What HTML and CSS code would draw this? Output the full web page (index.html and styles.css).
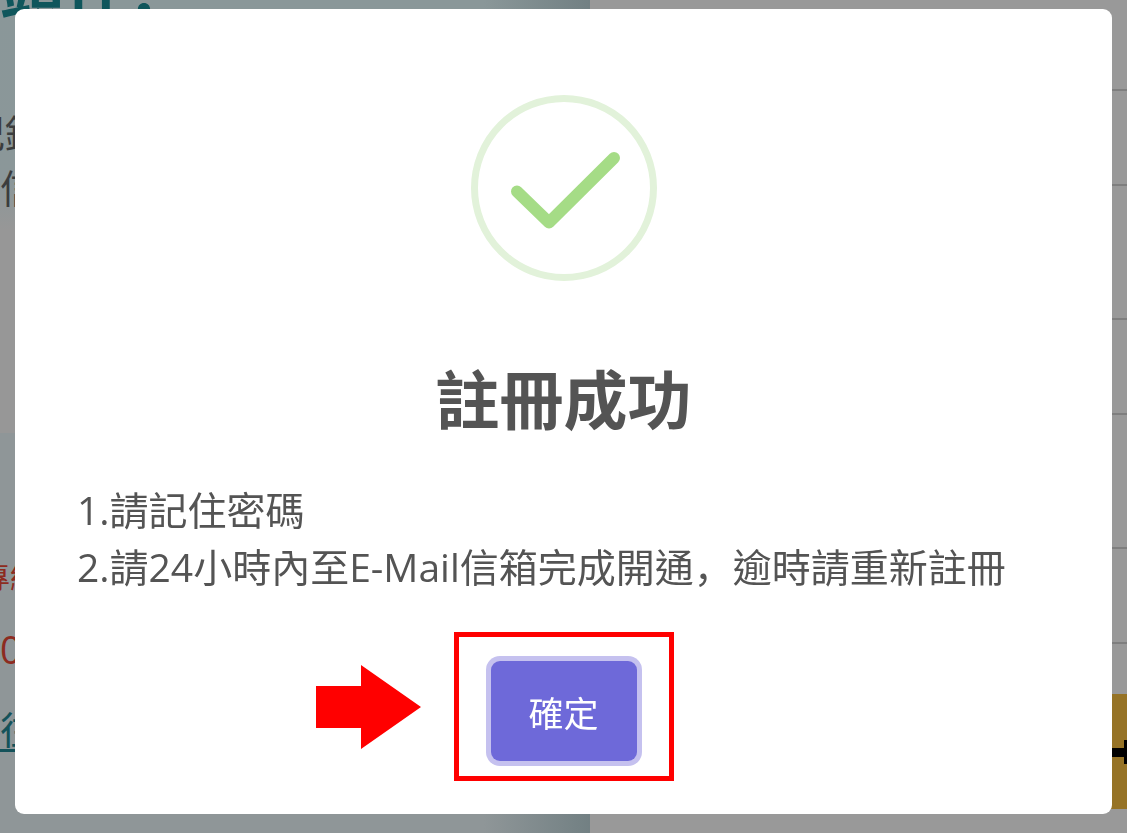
FILE: index.html
```html
<!DOCTYPE html>
<html lang="zh-Hant">
<head>
<meta charset="utf-8">
<title>註冊成功</title>
<link rel="stylesheet" href="styles.css">
</head>
<body>
<div class="page">
  <section class="intro">
    <div class="intro-top">
      <h1 class="headline">迎頭任<span lang="zh-Hans">：</span></h1>
      <p class="copy">紀錄</p>
      <p class="copy">信</p>
    </div>
    <div class="contact">
      <p class="alert">專線</p>
      <p class="alert phone">0</p>
      <a class="more" href="#">往</a>
    </div>
  </section>
  <section class="form">
    <div class="row row-first"></div>
    <div class="row row-short"></div>
    <div class="row row-tall"></div>
    <div class="row row-short"></div>
    <div class="row row-tall"></div>
    <div class="row row-short"></div>
    <div class="submit">
      <svg class="plus" viewBox="0 0 40 24" aria-hidden="true"><path d="M0 8H12V0H22V24H12V17H0Z"/></svg>
    </div>
  </section>
</div>
<div class="overlay">
  <div class="modal" role="dialog" aria-modal="true" aria-labelledby="modal-title">
    <svg class="success" viewBox="0 0 188 188" aria-hidden="true">
      <circle cx="94" cy="94" r="89.5"/>
      <path d="M47 97.500L79 128.500L144 64"/>
    </svg>
    <h2 class="title" id="modal-title">註冊成功</h2>
    <div class="message">
      <p>1.請記住密碼</p>
      <p>2.請24小時內至E-Mail信箱完成開通<span lang="zh-Hans">，</span>逾時請重新註冊</p>
    </div>
    <div class="actions">
      <svg class="arrow" viewBox="0 0 105 84" aria-hidden="true"><path d="M0 21H45V0L105 42L45 84V63H0Z"/></svg>
      <div class="highlight"><button class="confirm" type="button">確定</button></div>
      <span></span>
    </div>
  </div>
</div>
</body>
</html>
```
FILE: styles.css
```css
* { box-sizing: border-box; }
body {
  margin: 0;
  background: #999;
  color: #545454;
  font-family: "Open Sans", "Noto Sans CJK SC", sans-serif;
  overflow: hidden;
}
h1, h2, p { margin: 0; }
.page {
  display: grid;
  grid-template-columns: 590fr 537fr;
  height: 100vh;
  overflow: hidden;
}
.intro {
  background: linear-gradient(90deg, transparent 82%, #728083 100%), #8f9698;
  overflow: hidden;
}
.intro-top {
  display: flow-root;
  height: 433px;
  background: linear-gradient(90deg, transparent 82%, #728083 100%), linear-gradient(#8a9799 0, #8b9799 180px, #979797 230px, #979797 100%);
}
.headline {
  margin: -42px 0 0 -64px;
  padding-bottom: 83px;
  color: #0f565c;
  font-size: 64px;
  line-height: 64px;
}
.copy {
  margin-left: -34px;
  color: #3b3d3e;
  font-size: 39px;
  line-height: 55px;
}
.copy + .copy { margin-left: 0; }
.contact { padding-top: 116px; }
.alert {
  margin-left: -20px;
  color: #8d2b20;
  font-size: 30px;
  line-height: 56px;
}
.phone {
  margin-left: 0;
  font-size: 38px;
  line-height: 88px;
}
.more {
  color: #14525a;
  font-size: 38px;
  line-height: 72px;
  text-underline-offset: 5px;
}
.row {
  height: 95px;
  border-bottom: 2px solid #7f7f7f;
}
.row-first { height: 91px; }
.row-tall { height: 134px; }
.submit {
  display: flex;
  align-items: center;
  justify-content: flex-end;
  height: 115px;
  margin-top: 50px;
  overflow: hidden;
  background: #967326;
}
.plus {
  flex: none;
  width: 40px;
  height: 24px;
  margin-right: -25px;
}
.overlay {
  position: fixed;
  inset: 0;
  padding: 9px 15px 19px;
}
.modal {
  display: flex;
  flex-direction: column;
  align-items: center;
  height: 100%;
  padding-top: 85px;
  border-radius: 9px;
  background: #fff;
}
.success {
  flex: none;
  width: 188px;
  height: 188px;
  fill: none;
}
.success circle { stroke: #e2f2da; stroke-width: 7; }
.success path {
  stroke: #a5dc86;
  stroke-width: 12;
  stroke-linecap: round;
  stroke-linejoin: round;
}
.title {
  margin-top: 72px;
  font-size: 64px;
  line-height: 92px;
}
.message {
  align-self: stretch;
  padding: 35px 62px 0;
  font-size: 39px;
  line-height: 57px;
}
.actions {
  display: grid;
  grid-template-columns: 1fr auto 1fr;
  align-items: center;
  align-self: stretch;
  margin-top: 37px;
}
.arrow {
  justify-self: end;
  width: 105px;
  height: 84px;
  margin-right: 33px;
  fill: #f00;
}
.highlight {
  padding: 24px 32px 15px;
  border: 5px solid #f00;
}
.confirm {
  display: block;
  width: 146px;
  height: 100px;
  padding: 0;
  border: 0;
  border-radius: 9px;
  background: #6e69d9;
  box-shadow: 0 0 0 5px #c5c1ef;
  color: #fff;
  font: inherit;
  font-size: 35px;
}
```
